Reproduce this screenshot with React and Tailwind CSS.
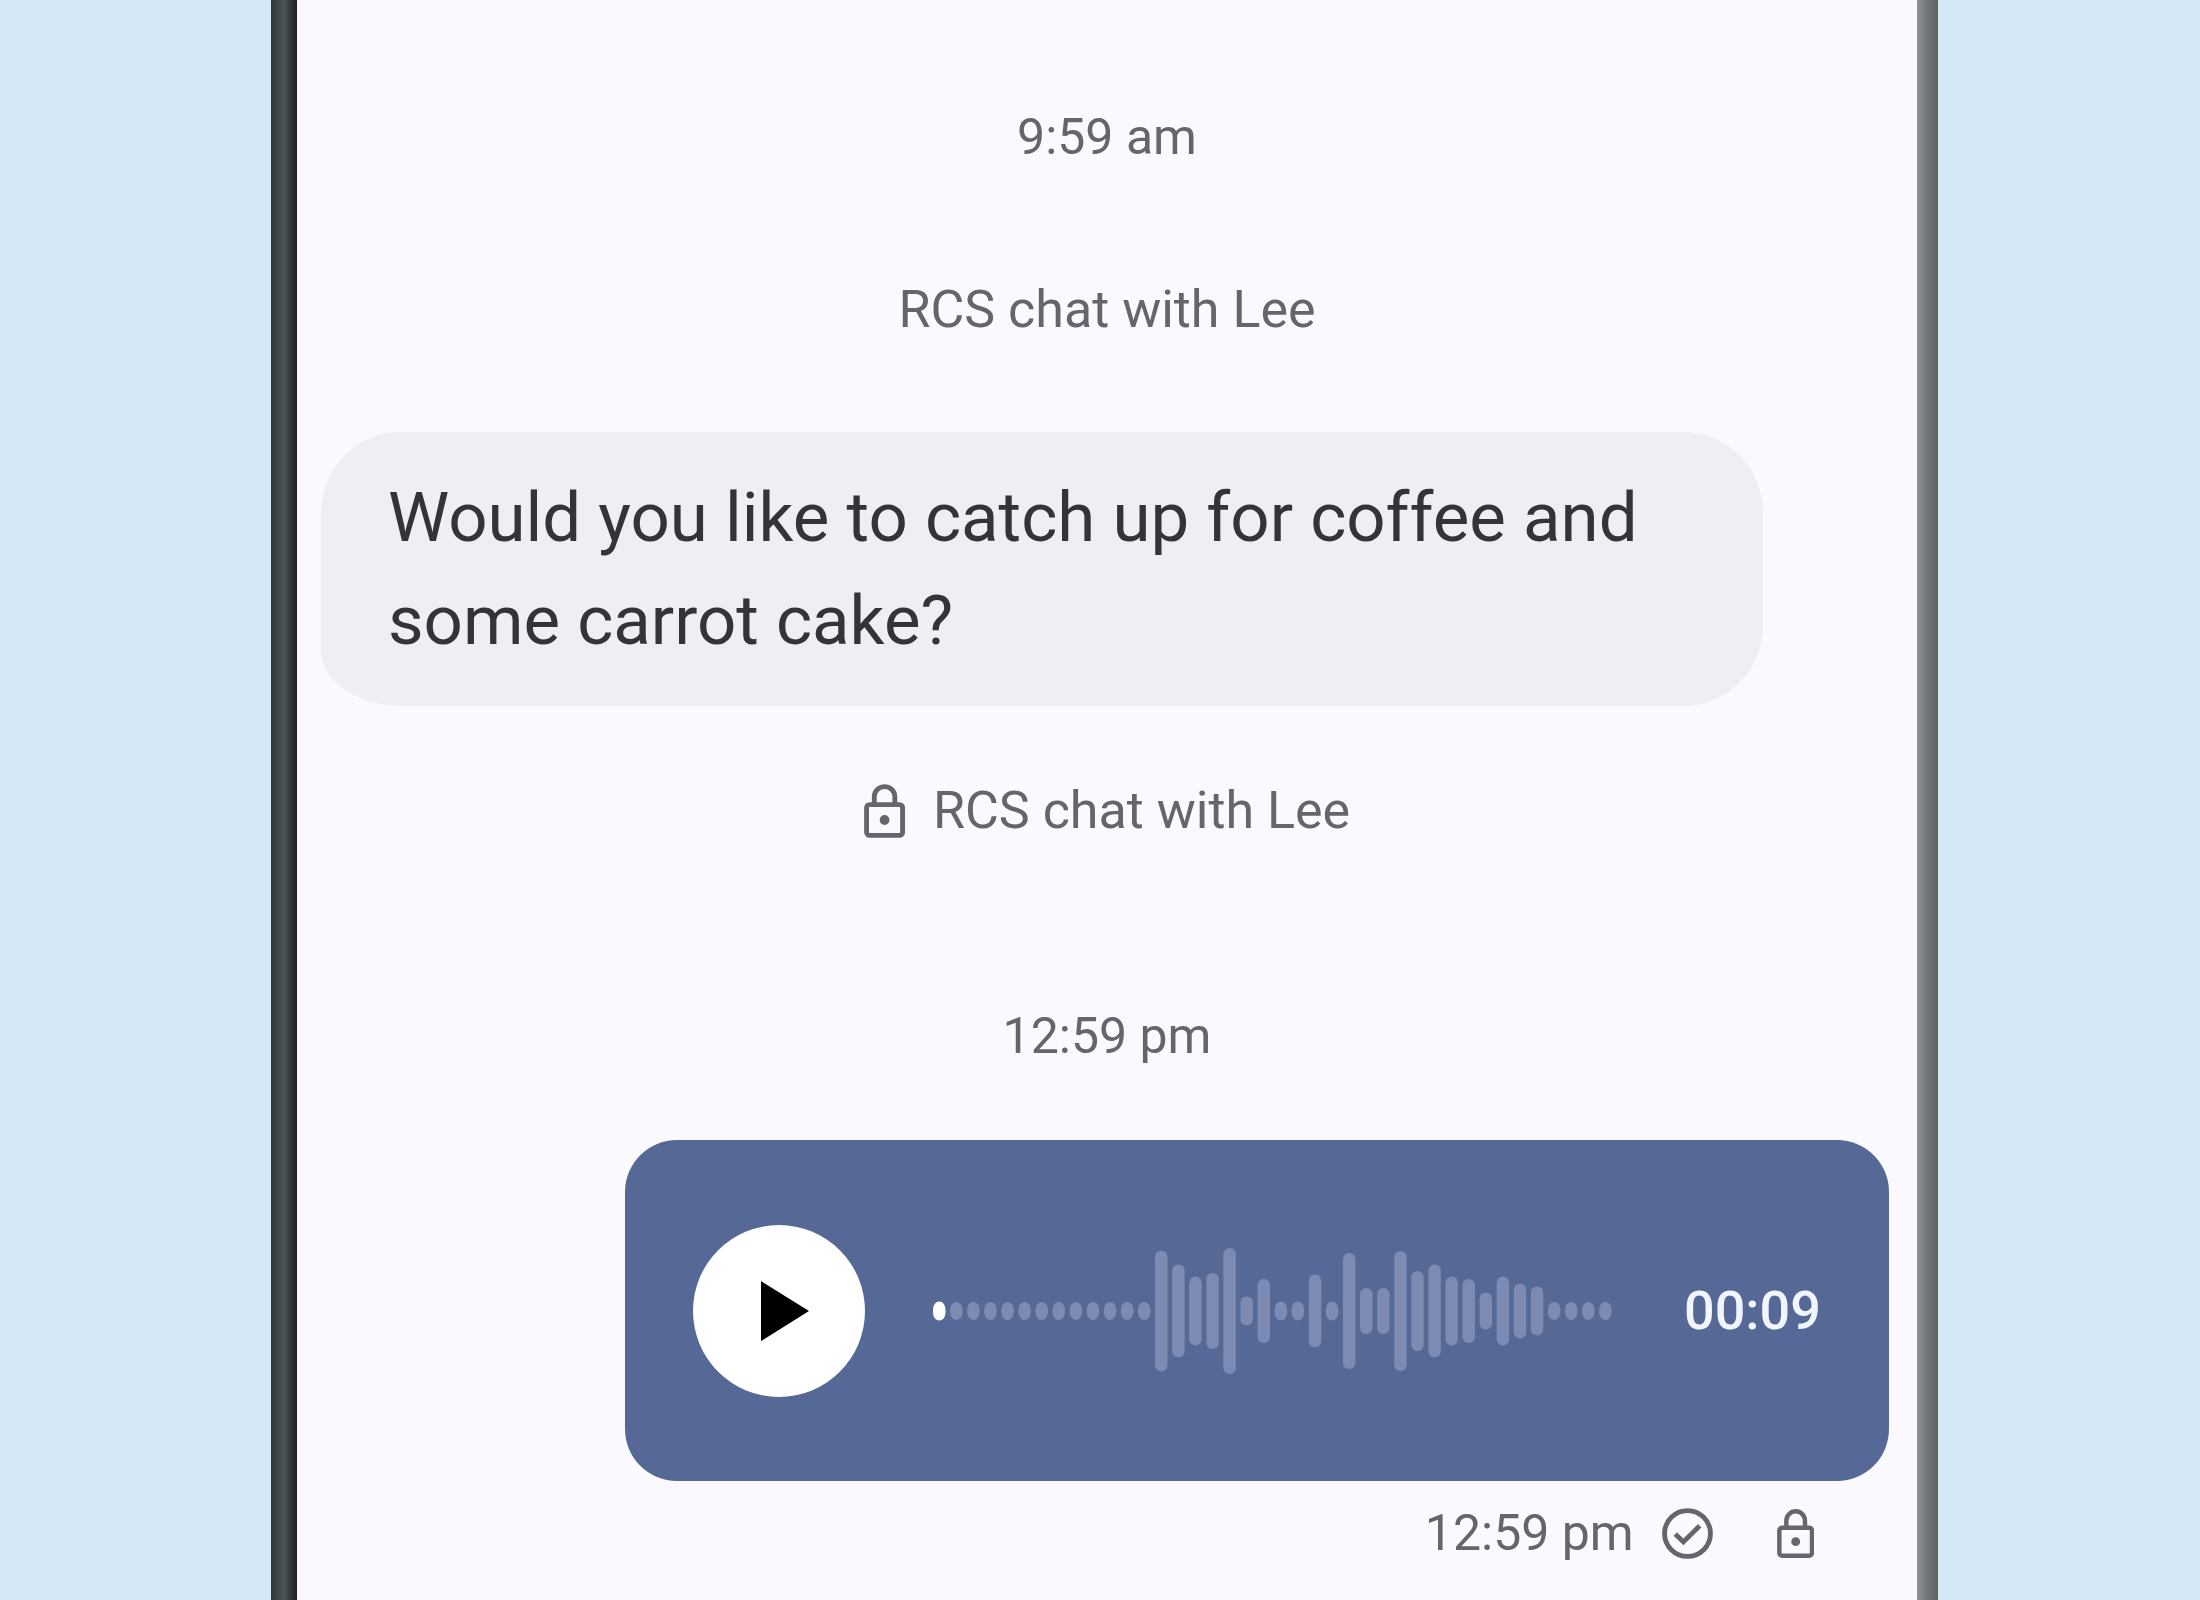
import React, { useState } from "react";
import clsx from "clsx";

const levels = [
  19, 18, 18, 18, 18, 18, 18, 18, 18, 18, 18, 18, 18, 121, 93, 69, 76, 126, 29, 64,
  19, 19, 73, 19, 116, 46, 46, 120, 80, 93, 69, 64, 37, 69, 55, 49, 18, 18, 18, 18,
];

const LockIcon = ({ className }) => (
  <svg viewBox="4 1 16 21" fill="none" stroke="currentColor" strokeWidth="1.9" className={className} aria-hidden="true">
    <rect x="5" y="9" width="14" height="12" rx="1.2" />
    <path d="M8 9V6a4 4 0 0 1 8 0v3" />
    <circle cx="12" cy="15" r="1.9" fill="currentColor" stroke="none" />
  </svg>
);

const SentIcon = ({ className }) => (
  <svg viewBox="2 2 20 20" fill="none" stroke="currentColor" strokeWidth="1.9" className={className} aria-hidden="true">
    <circle cx="12" cy="12" r="9" />
    <path d="M7.2 12.2l3.2 3.1 6.4-6.3" />
  </svg>
);

const Waveform = ({ played }) => (
  <svg viewBox="0 0 679 126" className="w-[679px] shrink-0" aria-hidden="true">
    {levels.map((h, i) => (
      <rect
        key={i}
        x={i * 17.08}
        y={63 - h / 2}
        width="12.5"
        height={h}
        rx="6.25"
        ry={h < 20 ? 8 : 6.25}
        className={clsx(i <= played ? "fill-white" : "fill-[#7d8ab3]")}
      />
    ))}
  </svg>
);

const Note = ({ children, className }) => (
  <p className={clsx("flex items-center justify-center leading-[64px] text-[#65656d]", className)}>
    {children}
  </p>
);

const VoiceMessage = () => {
  const [playing, setPlaying] = useState(false);

  return (
    <div className="mr-7 flex h-[341px] items-center self-end rounded-[52px] bg-[#556896] px-[68px]">
      <button
        onClick={() => setPlaying((p) => !p)}
        aria-label={playing ? "Pause" : "Play"}
        className="flex size-[172px] shrink-0 items-center justify-center rounded-full bg-white"
      >
        <svg viewBox="0 0 60 60" className="size-[60px]" aria-hidden="true">
          {playing ? <path d="M12 2h12v56H12zM36 2h12v56H36z" /> : <path d="M12 0v60l48-30z" />}
        </svg>
      </button>
      <div className="ml-[68px] mr-[72px]">
        <Waveform played={0} />
      </div>
      <span className="text-[54px] leading-[64px] font-medium text-[#f1f5ff]">00:09</span>
    </div>
  );
};

export default function App() {
  return (
    <div className="grid min-h-screen grid-cols-[271fr_1667fr_262fr] bg-[#d5e8f5] font-[Roboto,sans-serif]">
      {/* Phone */}
      <div className="col-start-2 flex">
        <div className="w-[26px] shrink-0 bg-linear-to-r from-[#2f3637] via-[#4d5656] to-[#221e20]" />

        <main className="flex grow flex-col bg-[#fafafe] pt-[105px]">
          <Note className="text-[50px]">9:59 am</Note>
          <Note className="mt-[109px] text-[52px]">RCS chat with Lee</Note>

          <div className="mt-[90px] ml-6 max-w-[1442px] rounded-[80px] rounded-bl-[80px_56px] bg-[#efeff3] px-[67px] py-[34px] text-[69px] leading-[103px] text-[#333338]">
            Would you like to catch up for coffee and some carrot cake?
          </div>

          <Note className="mt-[73px] text-[52px]">
            <LockIcon className="mr-7 h-[54px]" />
            RCS chat with Lee
          </Note>

          <Note className="mt-[161px] mb-[72px] text-[50px]">12:59 pm</Note>
          <VoiceMessage />

          {/* Delivery status */}
          <div className="mt-5 mr-[103px] flex items-center self-end text-[50px] leading-[64px] text-[#65656d]">
            12:59 pm
            <SentIcon className="ml-7 size-[51px]" />
            <LockIcon className="ml-16 h-[49px]" />
          </div>
        </main>

        <div className="w-[21px] shrink-0 bg-linear-to-r from-[#929496] via-[#717678] to-[#5c6466]" />
      </div>
    </div>
  );
}
